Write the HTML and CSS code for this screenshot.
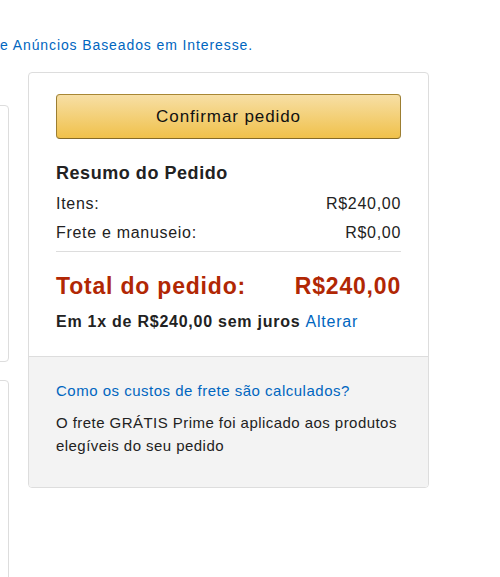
FILE: index.html
```html
<!DOCTYPE html>
<html lang="pt-BR">
<head>
    <meta charset="UTF-8">
    <meta name="viewport" content="width=device-width, initial-scale=1.0">
    <title>Resumo do Pedido</title>
    <link rel="stylesheet" href="styles.css">
</head>
<body>
    <!-- Ad notice line (cut off on the left) -->
    <p class="notice"><a href="#">e Anúncios Baseados em Interesse.</a></p>

    <div class="checkout">
        <!-- Left column, mostly off screen -->
        <div class="left-col">
            <div class="left-box first"></div>
            <div class="left-box second"></div>
        </div>

        <!-- Order summary -->
        <div class="summary">
            <div class="summary-main">
                <button class="place-order">Confirmar pedido</button>

                <h3>Resumo do Pedido</h3>
                <div class="row">
                    <span>Itens:</span>
                    <span>R$240,00</span>
                </div>
                <div class="row">
                    <span>Frete e manuseio:</span>
                    <span>R$0,00</span>
                </div>

                <div class="row total">
                    <span>Total do pedido:</span>
                    <span>R$240,00</span>
                </div>
                <p class="installments">Em 1x de R$240,00 sem juros <a href="#">Alterar</a></p>
            </div>

            <div class="summary-foot">
                <a href="#">Como os custos de frete são calculados?</a>
                <p>O frete GRÁTIS Prime foi aplicado aos produtos elegíveis do seu pedido</p>
            </div>
        </div>
    </div>
</body>
</html>
```

FILE: styles.css
```css
body {
    font-family: "Liberation Sans", Arial, sans-serif;
    margin: 0;
    padding: 0;
    background-color: #fff;
    color: #111;
}

a {
    color: #0066c0;
    text-decoration: none;
}

.notice {
    margin: 35px 0 0 0;
    font-size: 14px;
    line-height: 20px;
    letter-spacing: 0.9px;
}

.checkout {
    display: flex;
    align-items: flex-start;
    margin-top: 17px;
}

/* Left column */
.left-col {
    width: 40px;
    margin-left: -31px;
    flex-shrink: 0;
}

.left-box {
    border: 1px solid #ddd;
    border-radius: 4px;
}

.left-box.first {
    margin-top: 33px;
    height: 255px;
}

.left-box.second {
    margin-top: 18px;
    height: 260px;
}

/* Summary box */
.summary {
    width: 399px;
    margin-left: 19px;
    border: 1px solid #ddd;
    border-radius: 4px;
    overflow: hidden;
}

.summary-main {
    padding: 21px 27px 25px 27px;
}

.place-order {
    display: block;
    width: 100%;
    height: 45px;
    font-family: inherit;
    font-size: 17px;
    letter-spacing: 0.9px;
    color: #111;
    background: linear-gradient(to bottom, #f7dfa5, #f0c14b);
    border: 1px solid;
    border-color: #a88734 #9c7e31 #846a29;
    border-radius: 4px;
    cursor: pointer;
    margin-bottom: 24px;
}

h3 {
    margin: 0 0 5px 0;
    font-size: 18px;
    font-weight: bold;
    letter-spacing: 0.55px;
    color: #222;
}

.row {
    display: flex;
    justify-content: space-between;
    font-size: 16px;
    line-height: 29px;
    letter-spacing: 0.7px;
    color: #222;
}

.row.total {
    border-top: 1px solid #ddd;
    margin-top: 4px;
    padding-top: 19px;
    font-size: 23px;
    line-height: 30px;
    letter-spacing: 0.8px;
    font-weight: bold;
    color: #b12704;
}

.installments {
    margin: 12px 0 0 0;
    font-size: 16px;
    letter-spacing: 0.75px;
    font-weight: bold;
    color: #222;
}

.installments a {
    font-weight: normal;
}

.summary-foot {
    background-color: #f3f3f3;
    border-top: 1px solid #ddd;
    padding: 25px 27px 30px 27px;
    font-size: 15px;
    letter-spacing: 0.5px;
}

.summary-foot p {
    margin: 12px 0 0 0;
    line-height: 23px;
    letter-spacing: 0.45px;
    color: #222;
}
```
